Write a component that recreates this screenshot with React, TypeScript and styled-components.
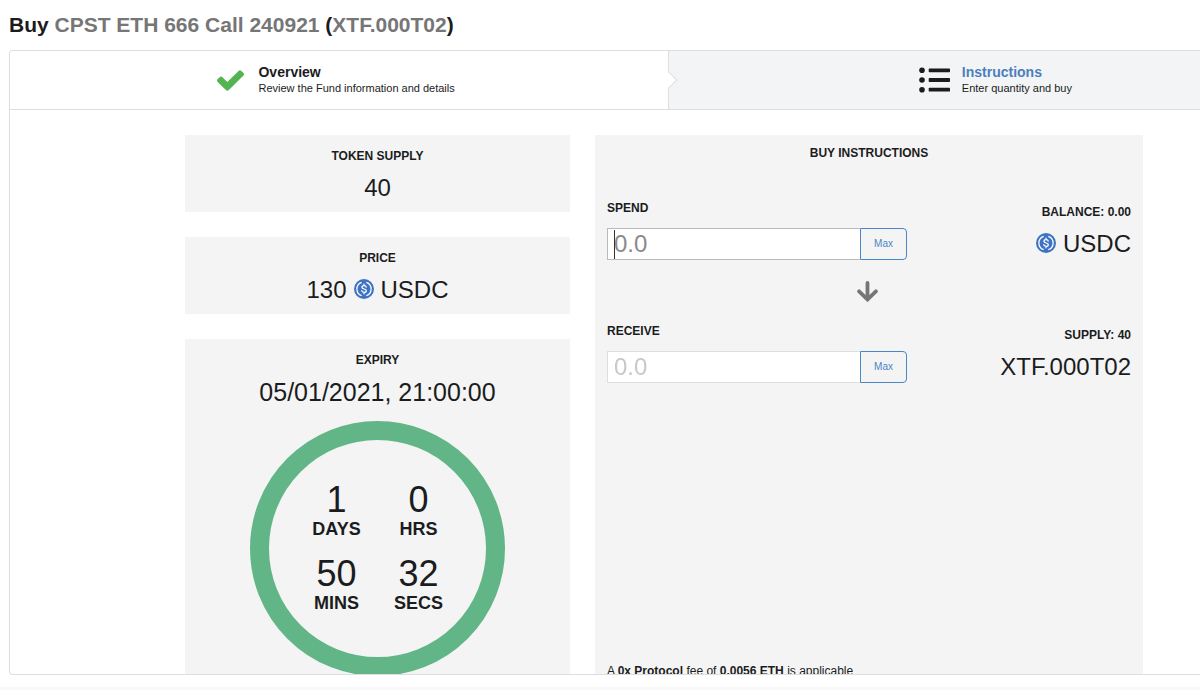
import React from "react";
import styled, { createGlobalStyle } from "styled-components";

const GlobalStyle = createGlobalStyle`
  *, *::before, *::after { box-sizing: border-box; }
  body {
    margin: 0;
    background: #fff;
    color: #1b1c1d;
    font-family: "Liberation Sans", Arial, sans-serif;
    font-size: 12px;
    line-height: 18px;
  }
`;

const Page = styled.div`
  display: flex;
  flex-direction: column;
  height: 100vh;
  overflow: hidden;
`;

const Title = styled.h1`
  margin: 0;
  padding: 11px 9px;
  font-size: 21px;
  line-height: 28px;
  font-weight: 700;
`;

const Muted = styled.span`
  color: #767676;
`;

const Frame = styled.main`
  flex: 1;
  min-height: 0;
  display: flex;
  flex-direction: column;
  margin: 0 0 12px 9px;
  overflow: hidden;
  border: 1px solid #dededf;
  border-right: 0;
  border-radius: 4px 0 0 4px;
`;

const BottomStrip = styled.footer`
  height: 3px;
  background: #f9f9f9;
`;

const Steps = styled.nav`
  display: flex;
  flex: none;
  overflow: hidden;
  border-bottom: 1px solid #dededf;
`;

const Step = styled.a<{ $current?: boolean }>`
  position: relative;
  flex: 0 0 55.4%;
  display: flex;
  align-items: center;
  justify-content: center;
  gap: ${(p) => (p.$current ? 14 : 12)}px;
  height: 58px;
  padding-right: 6px;
  color: inherit;
  text-decoration: none;
  background: ${(p) => (p.$current ? "#fff" : "#f3f4f5")};
  border-right: 1px solid #dededf;
  z-index: ${(p) => (p.$current ? 1 : 0)};

  &::after {
    content: "";
    display: ${(p) => (p.$current ? "block" : "none")};
    position: absolute;
    top: 50%;
    right: -7px;
    width: 12px;
    height: 12px;
    background: #fff;
    border: solid #dededf;
    border-width: 1px 1px 0 0;
    transform: translateY(-50%) rotate(45deg);
  }
`;

const StepTitle = styled.div<{ $link?: boolean }>`
  font-size: 14px;
  line-height: 16px;
  font-weight: 700;
  color: ${(p) => (p.$link ? "#4b7fbd" : "inherit")};
`;

const StepText = styled.div`
  font-size: 11px;
  line-height: 16px;
`;

const Content = styled.div`
  flex: none;
  display: grid;
  grid-template-columns: 385fr 548fr;
  gap: 25px;
  padding: 25px 57px 25px 175px;
`;

const Stats = styled.div`
  display: flex;
  flex-direction: column;
  gap: 25px;
`;

const Card = styled.section`
  padding: 12px 12px 9px;
  background: #f4f4f4;
  text-align: center;
`;

const Label = styled.h2`
  margin: 0 0 8px;
  font-size: 12px;
  line-height: 18px;
  font-weight: 700;
`;

const Value = styled.div`
  display: flex;
  align-items: center;
  justify-content: center;
  gap: 7px;
  font-size: 24px;
  line-height: 30px;
`;

const DateValue = styled(Value)`
  font-size: 25px;
`;

const Ring = styled.div`
  display: grid;
  grid-template-columns: 82px 82px;
  place-content: center;
  row-gap: 16px;
  width: 255px;
  height: 255px;
  margin: 14px auto 4px;
  padding-bottom: 3px;
  border: 19px solid #62b587;
  border-radius: 50%;
`;

const Count = styled.div`
  font-size: 36px;
  line-height: 38px;
`;

const Unit = styled.div`
  font-size: 18px;
  line-height: 20px;
  font-weight: 700;
`;

const Panel = styled.section`
  display: flex;
  flex-direction: column;
  padding: 9px 12px;
  background: #f4f4f4;
`;

const PanelTitle = styled.h2`
  margin: 0 0 37px;
  font-size: 12px;
  line-height: 18px;
  font-weight: 700;
  text-align: center;
`;

const TradeRow = styled.div`
  display: flex;
  justify-content: space-between;
`;

const Field = styled.div`
  width: 300px;
`;

const FieldLabel = styled.label`
  display: block;
  margin-bottom: 11px;
  font-weight: 700;
`;

const InputGroup = styled.div`
  position: relative;
  display: flex;
  height: 32px;
`;

const Caret = styled.span`
  position: absolute;
  top: 2px;
  bottom: 1px;
  left: 7px;
  width: 1px;
  background: #333;
`;

const Amount = styled.input`
  flex: 1;
  min-width: 0;
  padding: 0 6px;
  border: 1px solid #dededf;
  border-right: 0;
  border-radius: 0;
  outline: none;
  background: #fff;
  color: inherit;
  caret-color: transparent;
  font: 24px/30px "Liberation Sans", Arial, sans-serif;

  &::placeholder { color: #c8c8c8; }
  &:focus { border-color: #b9bbbd; }
  &:focus::placeholder { color: #8a8a8a; }
`;

const MaxButton = styled.button`
  width: 47px;
  padding: 0;
  border: 1px solid #4b86c6;
  border-radius: 0 4px 4px 0;
  background: #f4f4f4;
  color: #4b86c6;
  font: 10px/12px "Liberation Sans", Arial, sans-serif;
`;

const Holding = styled.div`
  padding-top: 4px;
  text-align: right;
`;

const HoldingValue = styled(Value)`
  justify-content: flex-end;
`;

const Direction = styled.div`
  display: flex;
  align-items: center;
  justify-content: center;
  height: 24px;
  margin: 19px 0;
  padding-right: 4px;
`;

const Note = styled.p`
  margin: auto 0 0;
`;

const CoinSvg = styled.svg`
  flex: none;
  width: 20px;
  height: 20px;
  margin-bottom: 2px;
`;

function UsdCoin() {
  return (
    <CoinSvg viewBox="0 0 32 32" fill="none" aria-hidden="true">
      <circle cx="16" cy="16" r="16" fill="#3e73c4" />
      <g stroke="#fff" strokeWidth="2">
        <path d="M12.300 5.300a11.300 11.300 0 0 0 0 21.400M19.700 5.300a11.300 11.300 0 0 1 0 21.400" />
        <path
          strokeLinecap="round"
          d="M19.600 13c-.3-1.500-1.500-2.300-3.500-2.300-2.100 0-3.400 1-3.400 2.600 0 3.700 7 1.700 7 5.300 0 1.700-1.400 2.700-3.600 2.700s-3.500-1-3.800-2.600M16 8.300v2.200M16 21.500v2.200"
        />
      </g>
    </CoinSvg>
  );
}

function CheckIcon() {
  return (
    <svg width="27" height="21" viewBox="121 334 1550 1188" fill="#54b454" aria-hidden="true">
      <path d="M1671 566q0 40-28 68l-724 724-136 136q-28 28-68 28t-68-28l-136-136-362-362q-28-28-28-68t28-68l136-136q28-28 68-28t68 28l294 295 656-657q28-28 68-28t68 28l136 136q28 28 28 68z" />
    </svg>
  );
}

function ListIcon() {
  return (
    <svg width="31" height="26" viewBox="0 0 31 26" fill="#1b1c1d" aria-hidden="true">
      {[3.300, 13, 22.700].map((y) => (
        <g key={y}>
          <circle cx="3" cy={y} r="2.8" />
          <rect x="9.700" y={y - 1.900} width="21.300" height="3.800" rx="0.700" />
        </g>
      ))}
    </svg>
  );
}

function ArrowDownIcon() {
  return (
    <svg
      width="21"
      height="21"
      viewBox="0 0 21 21"
      fill="none"
      stroke="#767676"
      strokeWidth="3.800"
      strokeLinecap="round"
      aria-hidden="true"
    >
      <path d="M10.500 2v15.500M2.100 10.300l8.400 8.200 8.400-8.200" />
    </svg>
  );
}

const countdown = [
  { count: 1, unit: "DAYS" },
  { count: 0, unit: "HRS" },
  { count: 50, unit: "MINS" },
  { count: 32, unit: "SECS" },
];

export default function App() {
  return (
    <>
      <GlobalStyle />
      <Page>
        <Title>
          Buy <Muted>CPST ETH 666 Call 240921</Muted> (<Muted>XTF.000T02</Muted>)
        </Title>
        <Frame>
          <Steps>
            <Step $current href="#overview">
              <CheckIcon />
              <div>
                <StepTitle>Overview</StepTitle>
                <StepText>Review the Fund information and details</StepText>
              </div>
            </Step>
            <Step href="#instructions">
              <ListIcon />
              <div>
                <StepTitle $link>Instructions</StepTitle>
                <StepText>Enter quantity and buy</StepText>
              </div>
            </Step>
          </Steps>
          <Content>
            <Stats>
              <Card>
                <Label>TOKEN SUPPLY</Label>
                <Value>40</Value>
              </Card>
              <Card>
                <Label>PRICE</Label>
                <Value>
                  <span>130</span>
                  <UsdCoin />
                  <span>USDC</span>
                </Value>
              </Card>
              <Card>
                <Label>EXPIRY</Label>
                <DateValue>05/01/2021, 21:00:00</DateValue>
                <Ring>
                  {countdown.map(({ count, unit }) => (
                    <div key={unit}>
                      <Count>{count}</Count>
                      <Unit>{unit}</Unit>
                    </div>
                  ))}
                </Ring>
              </Card>
            </Stats>
            <Panel>
              <PanelTitle>BUY INSTRUCTIONS</PanelTitle>
              <TradeRow>
                <Field>
                  <FieldLabel htmlFor="spend">SPEND</FieldLabel>
                  <InputGroup>
                    <Amount id="spend" placeholder="0.0" autoFocus />
                    <Caret />
                    <MaxButton type="button">Max</MaxButton>
                  </InputGroup>
                </Field>
                <Holding>
                  <Label>BALANCE: 0.00</Label>
                  <HoldingValue>
                    <UsdCoin />
                    <span>USDC</span>
                  </HoldingValue>
                </Holding>
              </TradeRow>
              <Direction>
                <ArrowDownIcon />
              </Direction>
              <TradeRow>
                <Field>
                  <FieldLabel htmlFor="receive">RECEIVE</FieldLabel>
                  <InputGroup>
                    <Amount id="receive" placeholder="0.0" />
                    <MaxButton type="button">Max</MaxButton>
                  </InputGroup>
                </Field>
                <Holding>
                  <Label>SUPPLY: 40</Label>
                  <HoldingValue>XTF.000T02</HoldingValue>
                </Holding>
              </TradeRow>
              <Note>
                A <strong>0x Protocol</strong> fee of <strong>0.0056 ETH</strong> is applicable
              </Note>
            </Panel>
          </Content>
        </Frame>
        <BottomStrip />
      </Page>
    </>
  );
}
